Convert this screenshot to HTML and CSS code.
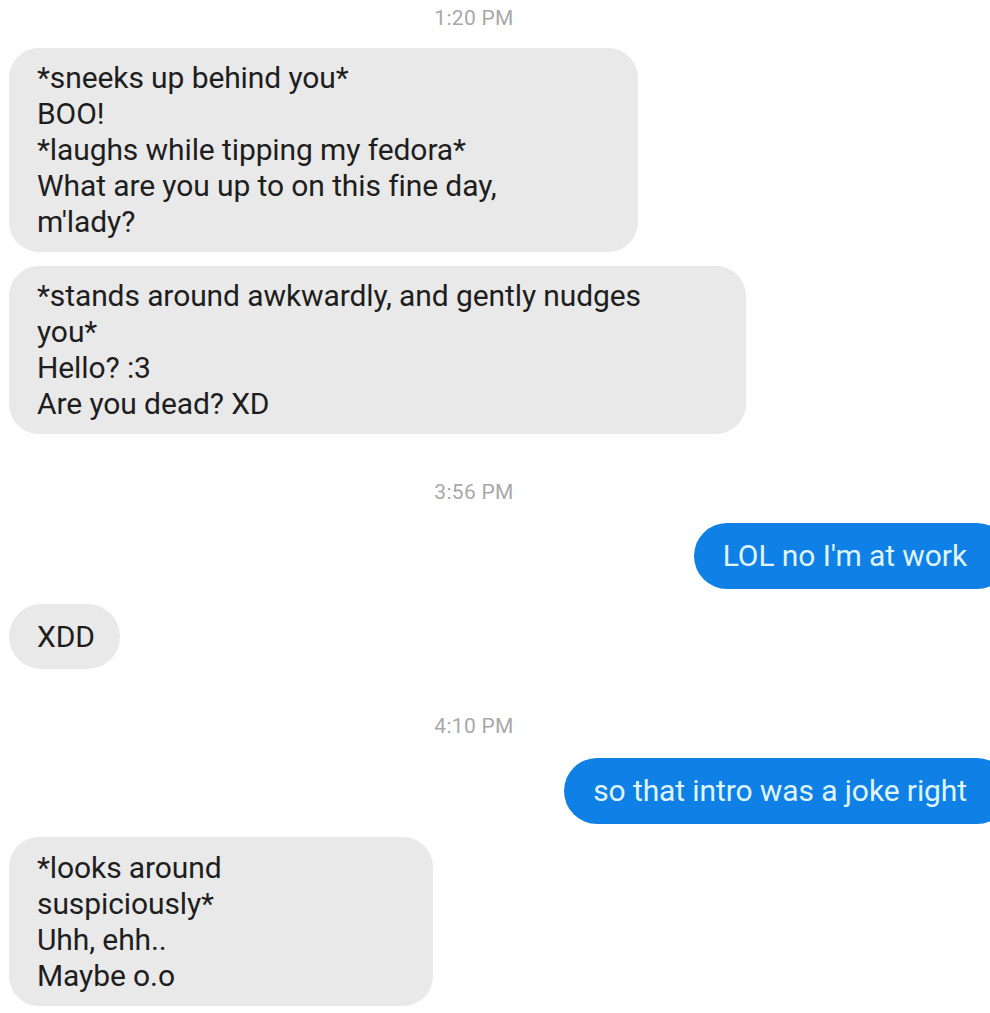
FILE: index.html
```html
<!DOCTYPE html>
<html>
<head>
<meta charset="utf-8">
<link rel="stylesheet" href="styles.css">
</head>
<body>
<div class="chat">
  <div class="time t1">1:20 PM</div>
  <div class="bubble in b1">*sneeks up behind you*<br>BOO!<br>*laughs while tipping my fedora*<br>What are you up to on this fine day,<br>m'lady?</div>
  <div class="bubble in b2">*stands around awkwardly, and gently nudges<br>you*<br>Hello? :3<br>Are you dead? XD</div>
  <div class="time t2">3:56 PM</div>
  <div class="bubble out o1">LOL no I'm at work</div>
  <div class="bubble in pill x1">XDD</div>
  <div class="time t3">4:10 PM</div>
  <div class="bubble out o2">so that intro was a joke right</div>
  <div class="bubble in b3">*looks around<br>suspiciously*<br>Uhh, ehh..<br>Maybe o.o</div>
</div>
</body>
</html>
```
FILE: styles.css
```css
html, body {
  margin: 0;
  padding: 0;
  background: #ffffff;
  overflow: hidden;
}
.chat {
  display: flex;
  flex-direction: column;
  align-items: flex-start;
  padding: 6px 0 0 9px;
  width: 990px;
  box-sizing: border-box;
  font-family: Roboto, "Liberation Sans", sans-serif;
}
.time {
  align-self: stretch;
  text-align: center;
  padding-right: 51px;
  font-size: 21px;
  letter-spacing: 0.3px;
  line-height: 24px;
  color: #a8a8a8;
}
.t2 { margin-top: 46px; }
.t3 { margin-top: 45px; }
.bubble {
  box-sizing: border-box;
  font-size: 30px;
  line-height: 36px;
  border-radius: 30px;
  padding: 12px 20px 12px 28px;
  letter-spacing: -0.1px;
}
.in {
  background: #e9e9e9;
  color: #1e1e1e;
}
.out {
  align-self: flex-end;
  margin-right: -20px;
  background: #0f80e6;
  color: #dff4ff;
  border-radius: 34px;
  padding: 15px 43px 15px 29px;
}
.b1 { margin-top: 18px; width: 629px; }
.b2 { margin-top: 14px; width: 737px; }
.o1 { margin-top: 19px; }
.x1 { margin-top: 15px; width: 111px; border-radius: 33px; padding: 15px 20px 14px 28px; }
.o2 { margin-top: 20px; }
.b3 { margin-top: 13px; width: 424px; padding-top: 13px; padding-bottom: 12px; }
```
